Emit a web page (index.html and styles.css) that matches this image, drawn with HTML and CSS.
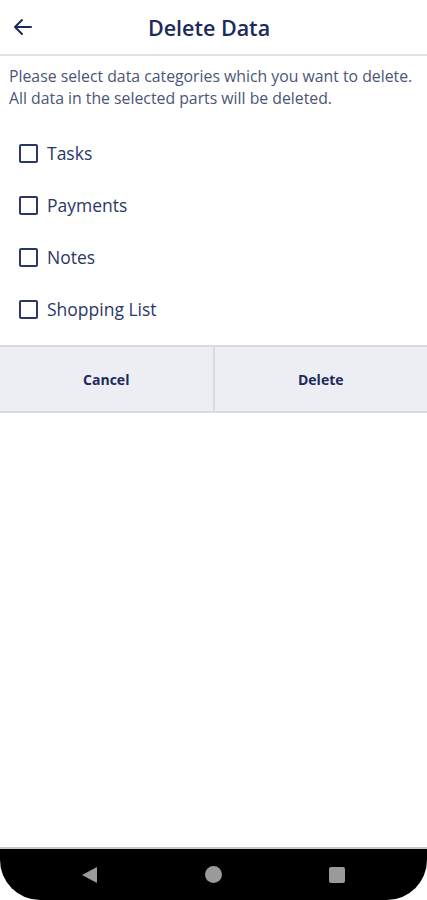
FILE: index.html
```html
<!DOCTYPE html>
<html lang="en">
<head>
    <meta charset="UTF-8">
    <meta name="viewport" content="width=device-width, initial-scale=1.0">
    <title>Delete Data</title>
    <link rel="stylesheet" href="styles.css">
</head>
<body>

    <div class="screen">
        <header class="topbar">
            <button class="back-btn" aria-label="Back">
                <svg width="24" height="24" viewBox="0 0 24 24">
                    <path d="M20 12H4.5M11 5l-7 7 7 7" fill="none" stroke="#1c2a5e" stroke-width="2" stroke-linecap="round" stroke-linejoin="round"/>
                </svg>
            </button>
            <h1>Delete Data</h1>
        </header>

        <p class="intro">Please select data categories which you want to delete.<br>All data in the selected parts will be deleted.</p>

        <form class="categories">
            <label class="option"><input type="checkbox"><span class="box"></span>Tasks</label>
            <label class="option"><input type="checkbox"><span class="box"></span>Payments</label>
            <label class="option"><input type="checkbox"><span class="box"></span>Notes</label>
            <label class="option"><input type="checkbox"><span class="box"></span>Shopping List</label>
        </form>

        <div class="actions">
            <button class="action">Cancel</button>
            <button class="action">Delete</button>
        </div>

        <div class="spacer"></div>

        <nav class="navbar">
            <span class="nav-back"></span>
            <span class="nav-home"></span>
            <span class="nav-recent"></span>
        </nav>
    </div>

</body>
</html>
```

FILE: styles.css
```css
body {
    font-family: 'Open Sans', 'Noto Sans', sans-serif;
    margin: 0;
    padding: 0;
    background-color: #ffffff;
    color: #1c2a5e;
}

.screen {
    width: 427px;
    height: 900px;
    display: flex;
    flex-direction: column;
}

/* header */
.topbar {
    height: 56px;
    display: flex;
    align-items: center;
    border-bottom: 2px solid #e1e3e8;
    box-sizing: border-box;
}

.back-btn {
    background: none;
    border: none;
    padding: 0;
    margin-left: 10px;
    width: 26px;
    height: 26px;
    display: flex;
    align-items: center;
    justify-content: center;
}

.topbar h1 {
    flex: 1;
    margin: 0 45px 0 0;
    text-align: center;
    font-size: 21.5px;
    font-weight: 600;
    color: #1c2a5e;
}

.intro {
    margin: 9px 0 0 9px;
    font-size: 15.8px;
    line-height: 22px;
    color: #4b5577;
    white-space: nowrap;
}

/* checkbox list */
.categories {
    display: flex;
    flex-direction: column;
    margin-top: 18px;
}

.option {
    height: 52px;
    display: flex;
    align-items: center;
    padding-left: 19px;
    font-size: 17.5px;
    color: #2b3766;
}

.option input {
    display: none;
}

.box {
    width: 15px;
    height: 15px;
    border: 2px solid #2b3766;
    border-radius: 2px;
    margin-right: 9px;
}

.option input:checked + .box {
    background-color: #2b3766;
}

/* buttons */
.actions {
    display: flex;
    margin-top: 10px;
    height: 64px;
    border-top: 2px solid #d8dbe1;
    border-bottom: 2px solid #d8dbe1;
    background-color: #eceef3;
}

.action {
    flex: 1;
    background: transparent;
    border: none;
    font-family: 'Open Sans', 'Noto Sans', sans-serif;
    font-size: 14px;
    font-weight: bold;
    color: #1c2a5e;
    cursor: pointer;
}

.action + .action {
    border-left: 2px solid #d8dbe1;
}

.spacer {
    flex: 1;
}

/* android nav bar */
.navbar {
    height: 51px;
    background-color: #000;
    border-top: 2px solid #c8c8c8;
    border-radius: 0 0 40px 40px;
    display: flex;
    align-items: center;
    justify-content: space-between;
    padding: 0 82px;
}

.nav-back {
    width: 0;
    height: 0;
    border-top: 8px solid transparent;
    border-bottom: 8px solid transparent;
    border-right: 15px solid #9a9a9a;
}

.nav-home {
    width: 17px;
    height: 17px;
    border-radius: 50%;
    background-color: #9a9a9a;
}

.nav-recent {
    width: 16px;
    height: 16px;
    border-radius: 2px;
    background-color: #9a9a9a;
}
```
